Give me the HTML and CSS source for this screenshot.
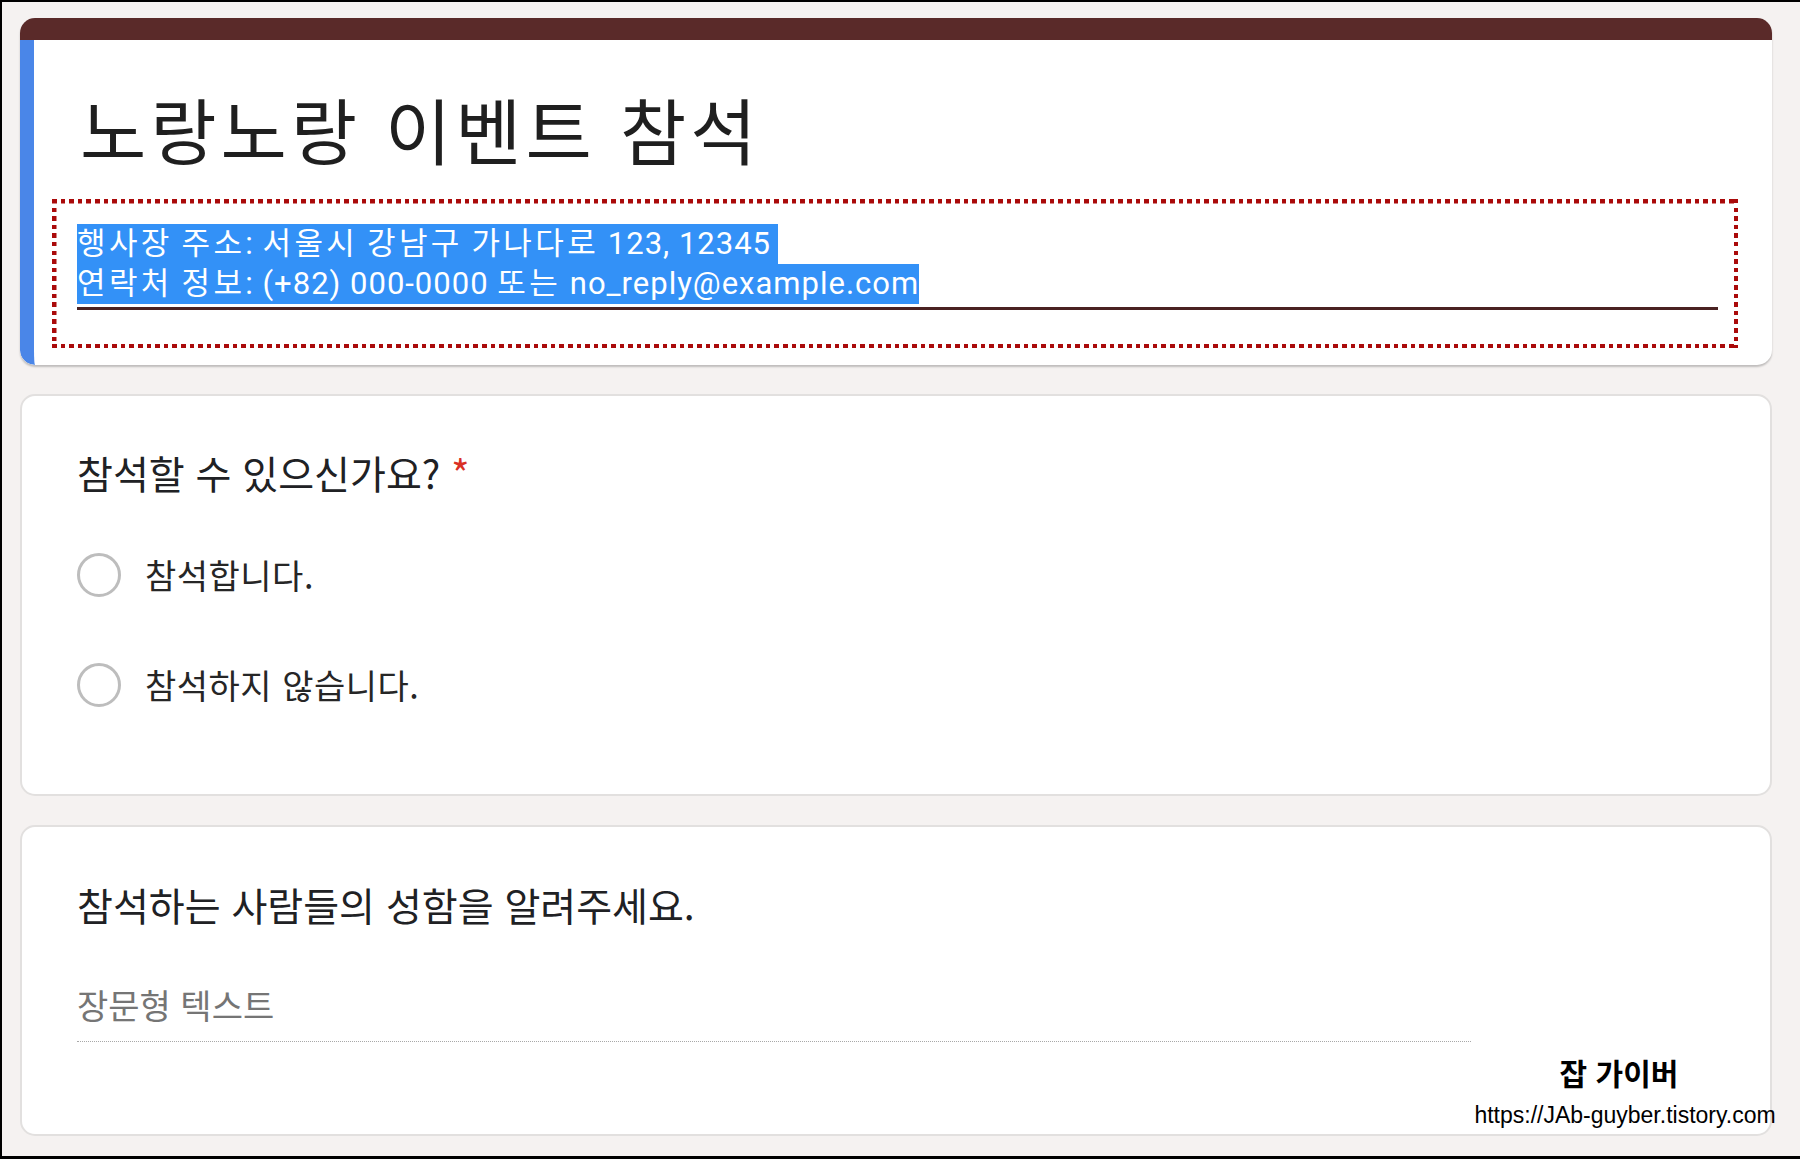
FILE: index.html
```html
<!DOCTYPE html>
<html lang="ko">
<head>
<meta charset="utf-8">
<title>노랑노랑 이벤트 참석</title>
<link rel="stylesheet" href="styles.css">
</head>
<body>
<div class="frame">
  <div class="card header-card">
    <div class="topbar"></div>
    <div class="header-body">
      <h1 class="title">노랑노랑 이벤트 참석</h1>
      <div class="annot">
        <div class="desc">
          <div class="sel nl"><span class="ko">행사장</span> <span class="ko">주소</span>: <span class="ko">서울시</span> <span class="ko">강남구</span> <span class="ko">가나다로</span> 123, 12345</div>
          <div class="sel"><span class="ko">연락처</span> <span class="ko">정보</span>: (+82) 000-0000 <span class="ko">또는</span> no_reply@example.com</div>
        </div>
        <div class="underline"></div>
      </div>
    </div>
  </div>

  <div class="card q-card q1">
    <div class="question">참석할 수 있으신가요?<span class="req">*</span></div>
    <div class="options">
      <label class="option"><span class="radio"></span><span class="opt-text">참석합니다.</span></label>
      <label class="option"><span class="radio"></span><span class="opt-text">참석하지 않습니다.</span></label>
    </div>
  </div>

  <div class="card q-card q2">
    <div class="question">참석하는 사람들의 성함을 알려주세요.</div>
    <div class="long-answer">장문형 텍스트</div>
    <div class="watermark">
      <div class="wm-name">잡 가이버</div>
      <div class="wm-url">https://JAb-guyber.tistory.com</div>
    </div>
  </div>
</div>
</body>
</html>
```
FILE: styles.css
```css
html, body {
  margin: 0;
  padding: 0;
}
body {
  background: #f5f2f1;
  font-family: "Noto Sans CJK KR", "Noto Sans", sans-serif;
  color: #202124;
}
.frame {
  box-sizing: border-box;
  width: 1800px;
  height: 1159px;
  border-top: 2px solid #000;
  border-left: 2px solid #000;
  border-bottom: 3px solid #000;
  padding: 16px 28px 0 18px;
  display: flex;
  flex-direction: column;
  gap: 29px;
}
.card {
  box-sizing: border-box;
  background: #fff;
  border-radius: 15px;
  position: relative;
}
.header-card {
  height: 347px;
  flex: none;
  overflow: hidden;
  box-shadow: 0 2px 2px rgba(0,0,0,0.22);
  display: flex;
  flex-direction: column;
}
.topbar {
  height: 22px;
  background: #5a2a29;
  flex: none;
}
.header-body {
  flex: 1;
  border-left: 14px solid #4a86e8;
  border-bottom-left-radius: 15px;
  padding: 0 34px 14px 18px;
  display: flex;
  flex-direction: column;
}
.title {
  margin: 45px 0 28px 28px;
  font-weight: 400;
  font-size: 72px;
  line-height: 86px;
  letter-spacing: 4px;
  color: #1f1f1f;
}
.annot {
  padding: 25px 20px 38px 25px;
  background:
    repeating-linear-gradient(90deg, #aa0a0a 0 4.5px, transparent 4.5px 8.6px) top left / 100% 4.5px no-repeat,
    repeating-linear-gradient(90deg, #aa0a0a 0 4.5px, transparent 4.5px 8.6px) bottom left / 100% 4.5px no-repeat,
    repeating-linear-gradient(180deg, #aa0a0a 0 4.5px, transparent 4.5px 8.6px) top left / 4.5px 100% no-repeat,
    repeating-linear-gradient(180deg, #aa0a0a 0 4.5px, transparent 4.5px 8.6px) top right / 4.5px 100% no-repeat;
}
.desc {
  font-family: Roboto, "Noto Sans CJK KR", sans-serif;
  font-size: 31px;
  line-height: 40px;
  color: #fff;
  letter-spacing: 1px;
}
.ko {
  letter-spacing: 3.4px;
}
.sel {
  width: fit-content;
  background: #3391f7;
  white-space: nowrap;
}
.nl {
  padding-right: 7px;
}
.underline {
  margin-top: 3px;
  height: 3px;
  background: #4a2222;
}
.q-card {
  border: 2px solid #e2e0df;
  padding-left: 55px;
  flex: none;
}
.q1 {
  height: 402px;
  padding-top: 50px;
}
.q2 {
  height: 311px;
  padding-top: 51px;
}
.question {
  font-size: 39px;
  line-height: 52px;
  color: #202124;
}
.req {
  color: #d93025;
  margin-left: 11px;
}
.options {
  margin-top: 49px;
  display: flex;
  flex-direction: column;
  gap: 54px;
}
.option {
  display: flex;
  align-items: center;
  height: 56px;
  gap: 24px;
}
.radio {
  box-sizing: border-box;
  width: 44px;
  height: 44px;
  border: 3px solid #bdbdbd;
  border-radius: 50%;
  flex: none;
}
.opt-text {
  font-size: 34px;
  line-height: 56px;
  letter-spacing: 0.5px;
  color: #262626;
}
.long-answer {
  margin-top: 53px;
  width: 1394px;
  font-size: 34px;
  line-height: 44px;
  color: #757575;
  padding-bottom: 14px;
  border-bottom: 1px dotted #a8a8a8;
}
.watermark {
  position: absolute;
  left: 1450px;
  top: 227px;
  width: 306px;
  text-align: center;
}
.wm-name {
  font-weight: 700;
  font-size: 30px;
  line-height: 36px;
  color: #000;
  padding-right: 12px;
}
.wm-url {
  font-family: "Liberation Sans", Arial, sans-serif;
  font-size: 23px;
  line-height: 30px;
  color: #000;
  margin-top: 10px;
  white-space: nowrap;
}
```
